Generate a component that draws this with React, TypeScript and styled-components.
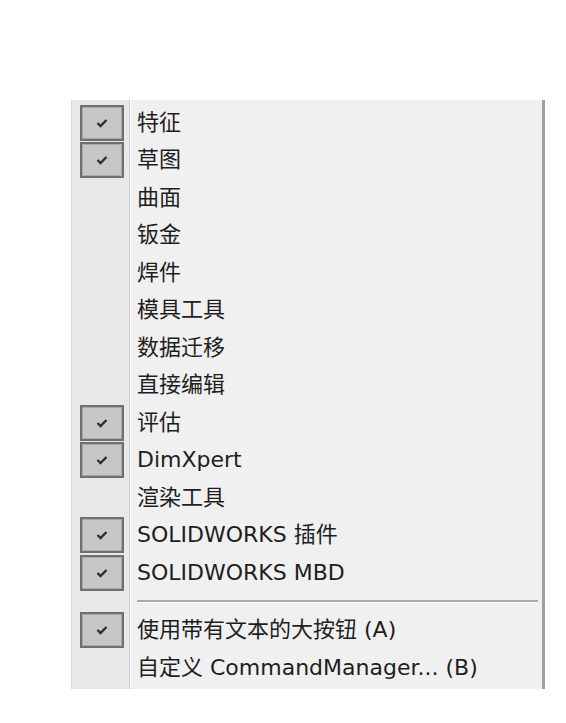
import styled, { createGlobalStyle } from 'styled-components';

const GlobalStyle = createGlobalStyle`
  body {
    margin: 0;
    background: #ffffff;
    font-family: "DejaVu Sans", "Noto Sans CJK SC", sans-serif;
  }
`;

type Item = { label: string; checked?: boolean };

const toolbars: Item[] = [
  { label: '特征', checked: true },
  { label: '草图', checked: true },
  { label: '曲面' },
  { label: '钣金' },
  { label: '焊件' },
  { label: '模具工具' },
  { label: '数据迁移' },
  { label: '直接编辑' },
  { label: '评估', checked: true },
  { label: 'DimXpert', checked: true },
  { label: '渲染工具' },
  { label: 'SOLIDWORKS 插件', checked: true },
  { label: 'SOLIDWORKS MBD', checked: true },
];

const options: Item[] = [
  { label: '使用带有文本的大按钮 (A)', checked: true },
  { label: '自定义 CommandManager... (B)' },
];

const Check = () => (
  <svg width="12" height="10" viewBox="0 0 12 10">
    <path d="M1.5 5 L4.5 8 L10.5 2" fill="none" stroke="#2e2e2e" strokeWidth="2.4" />
  </svg>
);

const MenuRow = ({ item }: { item: Item }) => (
  <Row>
    <Gutter>{item.checked ? <CheckBox><Check /></CheckBox> : null}</Gutter>
    <Label>{item.label}</Label>
  </Row>
);

const App = () => (
  <>
    <GlobalStyle />
    <Page>
      <Menu>
        {toolbars.map((it) => (
          <MenuRow key={it.label} item={it} />
        ))}
        <SeparatorRow>
          <Gutter />
          <Line />
        </SeparatorRow>
        {options.map((it) => (
          <MenuRow key={it.label} item={it} />
        ))}
      </Menu>
    </Page>
  </>
);

export default App;

const Page = styled.div`
  padding: 100px 0 0 71px;
`;

const Menu = styled.div`
  width: 470px;
  display: flex;
  flex-direction: column;
  padding: 4px 0 2px 0;
  background: #f0f0f0;
  border-left: 1px solid #d6d6d6;
  border-right: 3px solid #a0a0a0;
  background-image: linear-gradient(
    to right,
    #e8e8e8 0,
    #e8e8e8 57px,
    #c9c9c9 57px,
    #c9c9c9 58px,
    #ffffff 58px,
    #ffffff 59px,
    #f0f0f0 59px
  );
`;

const Row = styled.div`
  display: flex;
  align-items: center;
  height: 37.5px;
`;

const Gutter = styled.div`
  width: 65px;
  flex: none;
  height: 100%;
  display: flex;
  align-items: center;
  padding-left: 8px;
  box-sizing: border-box;
`;

const CheckBox = styled.div`
  width: 44px;
  height: 36px;
  box-sizing: border-box;
  border: 2px solid #6f6f6f;
  box-shadow: inset 0 0 0 1px #a8a8a8;
  background: #c6c6c6;
  display: flex;
  align-items: center;
  justify-content: center;
`;

const Label = styled.div`
  font-size: 22px;
  line-height: 1;
  color: #1e1e1e;
  white-space: nowrap;
`;

const SeparatorRow = styled.div`
  display: flex;
  align-items: center;
  height: 20px;
`;

const Line = styled.div`
  flex: 1;
  height: 2px;
  margin-right: 4px;
  background: #a9a9a9;
  border-bottom: 1px solid #ffffff;
`;
